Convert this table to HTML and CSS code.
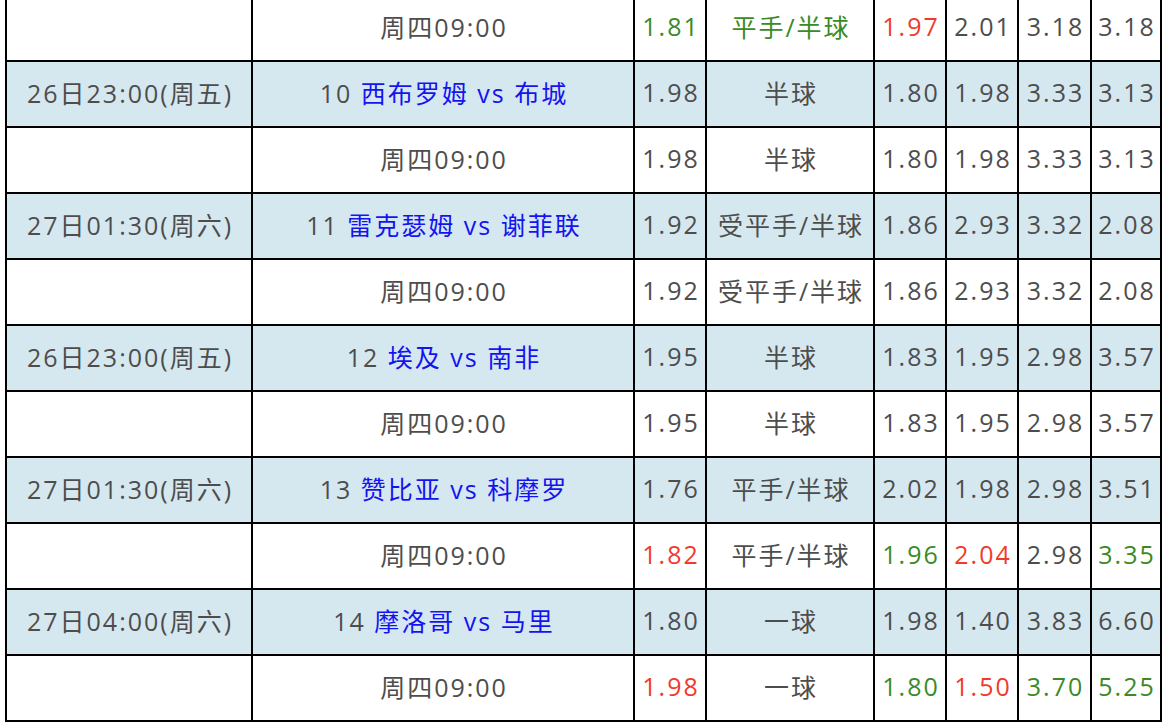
FILE: index.html
```html
<!DOCTYPE html>
<html lang="zh-CN">
<head>
<meta charset="utf-8">
<title>赔率</title>
<link rel="stylesheet" href="styles.css">
</head>
<body>
<div class="wrap">
<table class="odds">
  <colgroup>
    <col class="c-time"><col class="c-match"><col class="c-num"><col class="c-hc"><col class="c-num"><col class="c-num"><col class="c-num7"><col class="c-num8">
  </colgroup>
  <tbody>
    <tr class="sub">
      <td></td><td>周四09:00</td><td class="g">1.81</td><td class="g">平手/半球</td><td class="r">1.97</td><td>2.01</td><td>3.18</td><td>3.18</td>
    </tr>
    <tr class="main">
      <td>26日23:00(周五)</td><td>10 <span class="team">西布罗姆 vs 布城</span></td><td>1.98</td><td>半球</td><td>1.80</td><td>1.98</td><td>3.33</td><td>3.13</td>
    </tr>
    <tr class="sub">
      <td></td><td>周四09:00</td><td>1.98</td><td>半球</td><td>1.80</td><td>1.98</td><td>3.33</td><td>3.13</td>
    </tr>
    <tr class="main">
      <td>27日01:30(周六)</td><td>11 <span class="team">雷克瑟姆 vs 谢菲联</span></td><td>1.92</td><td>受平手/半球</td><td>1.86</td><td>2.93</td><td>3.32</td><td>2.08</td>
    </tr>
    <tr class="sub">
      <td></td><td>周四09:00</td><td>1.92</td><td>受平手/半球</td><td>1.86</td><td>2.93</td><td>3.32</td><td>2.08</td>
    </tr>
    <tr class="main">
      <td>26日23:00(周五)</td><td>12 <span class="team">埃及 vs 南非</span></td><td>1.95</td><td>半球</td><td>1.83</td><td>1.95</td><td>2.98</td><td>3.57</td>
    </tr>
    <tr class="sub">
      <td></td><td>周四09:00</td><td>1.95</td><td>半球</td><td>1.83</td><td>1.95</td><td>2.98</td><td>3.57</td>
    </tr>
    <tr class="main">
      <td>27日01:30(周六)</td><td>13 <span class="team">赞比亚 vs 科摩罗</span></td><td>1.76</td><td>平手/半球</td><td>2.02</td><td>1.98</td><td>2.98</td><td>3.51</td>
    </tr>
    <tr class="sub">
      <td></td><td>周四09:00</td><td class="r">1.82</td><td>平手/半球</td><td class="g">1.96</td><td class="r">2.04</td><td>2.98</td><td class="g">3.35</td>
    </tr>
    <tr class="main">
      <td>27日04:00(周六)</td><td>14 <span class="team">摩洛哥 vs 马里</span></td><td>1.80</td><td>一球</td><td>1.98</td><td>1.40</td><td>3.83</td><td>6.60</td>
    </tr>
    <tr class="sub">
      <td></td><td>周四09:00</td><td class="r">1.98</td><td>一球</td><td class="g">1.80</td><td class="r">1.50</td><td class="g">3.70</td><td class="g">5.25</td>
    </tr>
  </tbody>
</table>
</div>
</body>
</html>
```
FILE: styles.css
```css
html, body {
  margin: 0;
  padding: 0;
  background: #ffffff;
}

.wrap {
  padding-left: 5px;
}

.odds {
  margin-top: -6px;
  border-collapse: separate;
  border-spacing: 0;
  table-layout: fixed;
  width: 1157px;
  border-left: 2px solid #000;
  border-top: 2px solid #000;
  font-family: "Open Sans", "Noto Sans CJK SC", sans-serif;
  font-size: 25px;
  letter-spacing: 2px;
  color: #4d4d4d;
}

.c-time { width: 246px; }
.c-match { width: 382px; }
.c-num { width: 72px; }
.c-hc { width: 168px; }
.c-num7 { width: 73px; }
.c-num8 { width: 70px; }

.odds td {
  height: 60px;
  padding: 0 0 4px 2px;
  box-sizing: content-box;
  text-align: center;
  vertical-align: middle;
  white-space: nowrap;
  overflow: hidden;
  border-right: 2px solid #000;
  border-bottom: 2px solid #000;
}

.odds tr.main td {
  background: #d6e8ef;
}

.team {
  color: #1414f0;
}

.odds td.g {
  color: #3b8a26;
}

.odds td.r {
  color: #f23a2c;
}
```
